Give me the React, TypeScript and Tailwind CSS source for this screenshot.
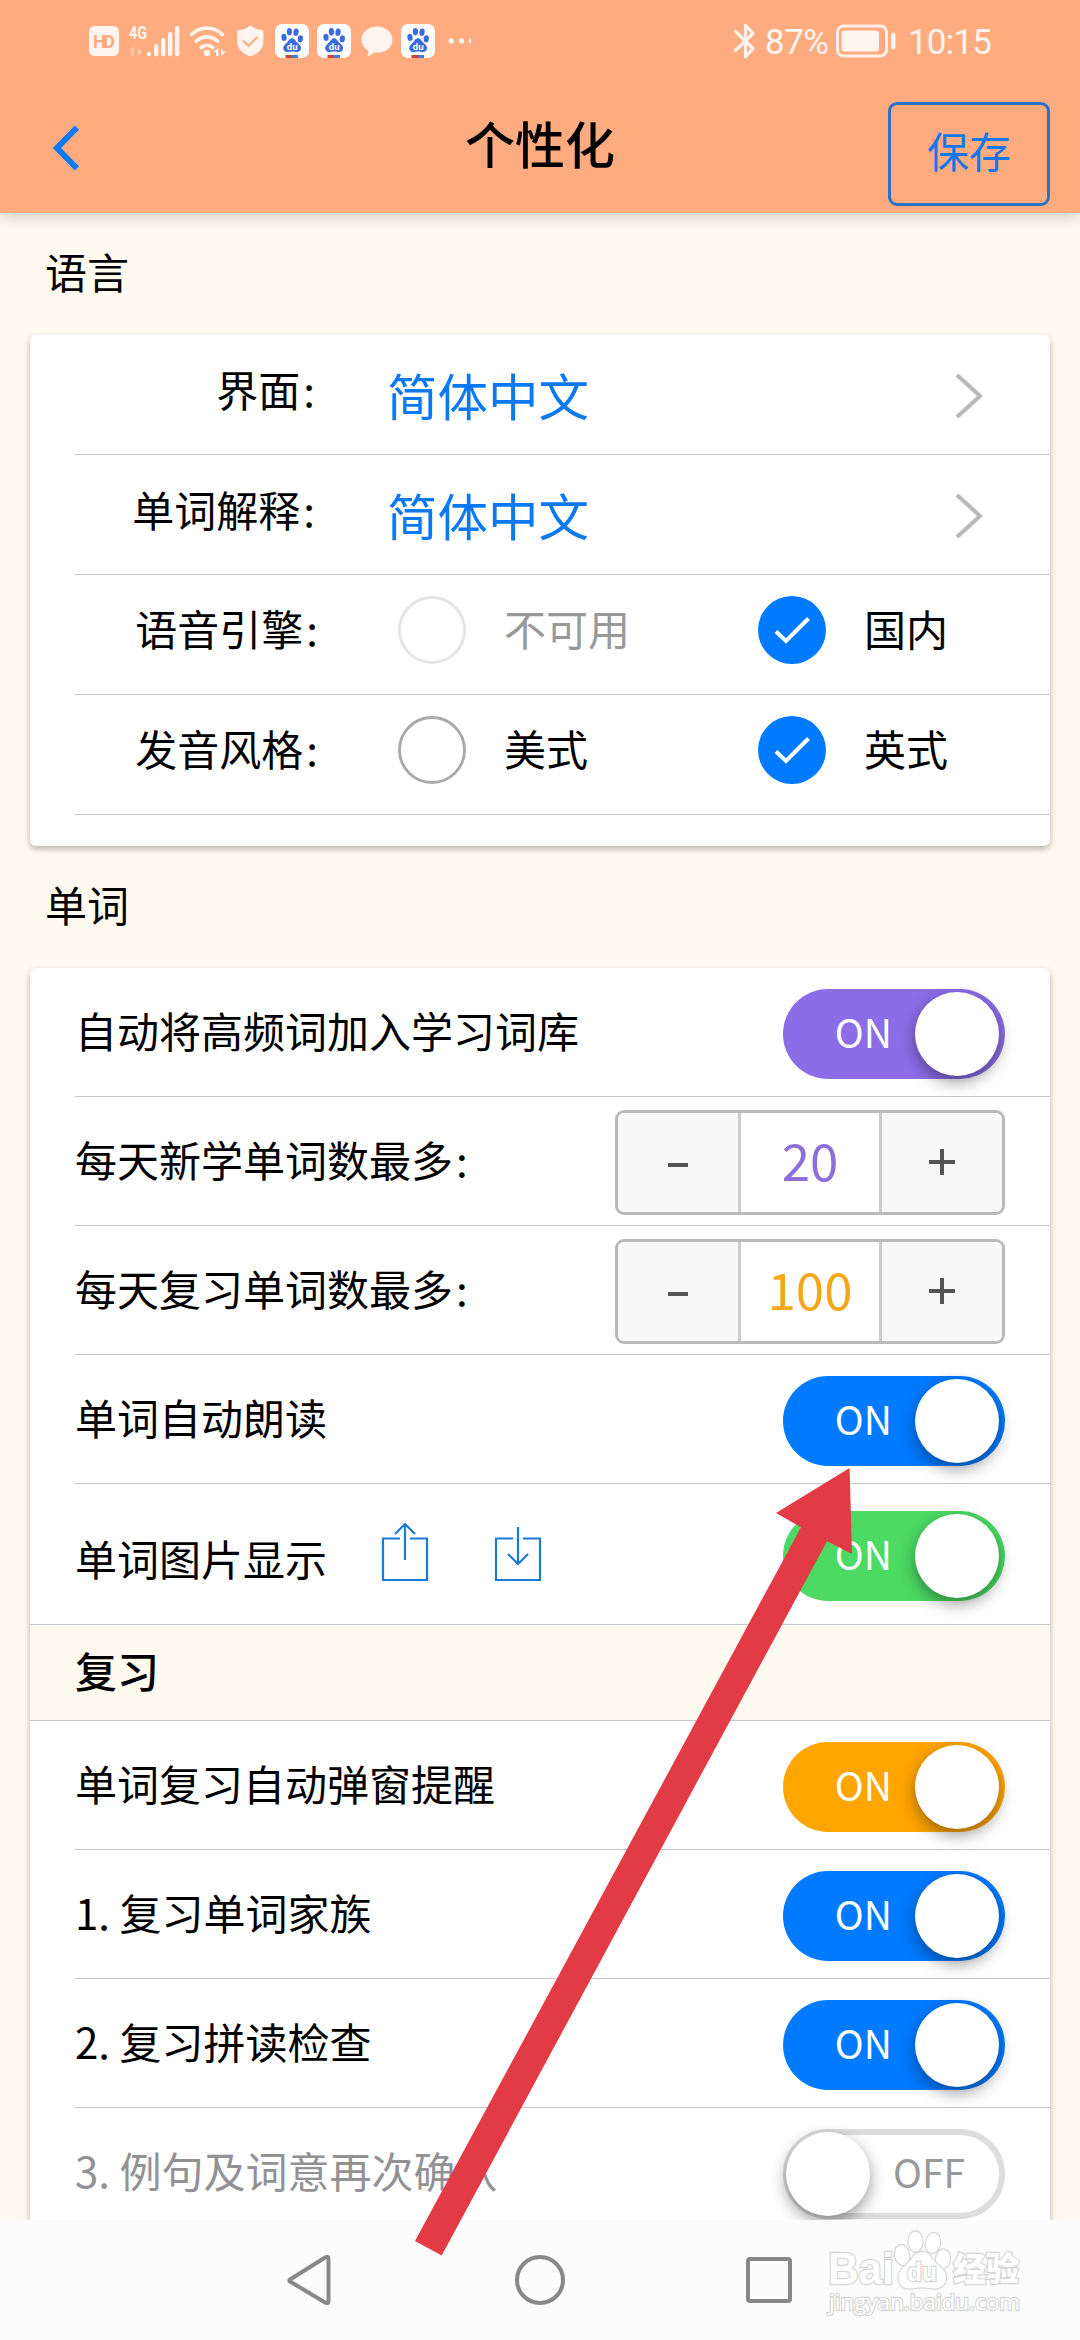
import React from "react";
import type { ReactNode } from "react";

function BaiduIcon({ className = "" }: { className?: string }) {
  return (
    <svg className={className} width="34" height="34" viewBox="0 0 34 34">
      <defs>
        <clipPath id="tile">
          <rect width="34" height="34" rx="7" />
        </clipPath>
      </defs>
      <rect width="34" height="34" rx="7" fill="#fff" />
      <g fill="#3a6be0">
        <ellipse cx="9" cy="13.3" rx="2.6" ry="3.6" transform="rotate(-8 9 13.3)" />
        <ellipse cx="14.4" cy="7.8" rx="2.6" ry="3.7" />
        <ellipse cx="21" cy="8.2" rx="2.6" ry="3.7" transform="rotate(10 21 8.2)" />
        <ellipse cx="25.3" cy="14.8" rx="2.6" ry="3.6" transform="rotate(8 25.3 14.8)" />
        <path d="M17 14.2c2.6 0 3.6 2.6 5.2 4.3 1.8 1.9 3.9 3 3.9 5.6 0 2.4-1.600 3.900-4 3.900-1.800 0-3.200-.5-5.100-.5s-3.200.5-4.900.5c-2.400 0-3.900-1.500-3.900-3.900 0-2.600 2.200-3.700 3.800-5.600 1.500-1.700 2.500-4.300 5-4.300z" />
      </g>
      <text x="17.200" y="26" textAnchor="middle" fontFamily="Roboto" fontWeight="700" fontSize="9.500" fill="#fff">
        du
      </text>
      <g clipPath="url(#tile)">
        <rect x="10.500" y="31" width="6.500" height="3" fill="#c9433f" />
        <rect x="17" y="31" width="6" height="3" fill="#4a76d8" />
      </g>
    </svg>
  );
}

function StatusBar() {
  return (
    <div className="flex h-[82px] items-center pl-[89px] font-[Roboto,sans-serif] text-[#fff5ee]">
      <svg width="30" height="30" viewBox="0 0 30 30" className="shrink-0">
        <rect width="30" height="30" rx="5.500" fill="#fff5ee" />
        <text x="15" y="22" textAnchor="middle" textLength="22" fontFamily="Roboto" fontWeight="700" fontSize="18" fill="#ffab80">
          HD
        </text>
      </svg>
      <svg width="51" height="40" viewBox="0 -4 51 40" className="ml-[10px] shrink-0" fill="#fff5ee">
        <text x="0" y="14" textLength="18" lengthAdjust="spacingAndGlyphs" fontFamily="Roboto" fontWeight="700" fontSize="18">
          4G
        </text>
        <path d="M5 21v10H2.500v-5H0zM9 21v10l5-5h-2.500z" opacity=".4" />
        <circle cx="20" cy="29" r="2.200" />
        <rect x="25" y="19" width="4.400" height="12.200" rx="2" />
        <rect x="32" y="13" width="4.400" height="18.200" rx="2" />
        <rect x="39" y="7" width="4.400" height="24.200" rx="2" />
        <rect x="46" y="1" width="4.400" height="30.200" rx="2" />
      </svg>
      <svg width="38" height="32" viewBox="0 0 38 32" className="ml-[9px] shrink-0" fill="none" stroke="#fff5ee" strokeWidth="3.600" strokeLinecap="round">
        <path d="M2.500 9.500C11.500.8 24.500.8 33.500 9.500M7.200 16.300c6.300-5.900 15.300-5.900 21.600 0M12.200 22.600c3.500-3 8.100-3 11.600 0" />
        <circle cx="18" cy="28" r="3.200" fill="#fff5ee" stroke="none" />
        <path d="M29.500 23v8h-2.500v-4h-3zM32 23v8l5-4.500h-2.500z" fill="#fff5ee" stroke="none" />
      </svg>
      <svg width="27" height="32" viewBox="0 0 27 32" className="ml-[10px] shrink-0">
        <path d="M13.300.5c3.600 2.700 7.600 4.200 12.200 4.700.6 0 .9.400.9 1v10.800c0 7-5.300 11.500-13.100 14.500C5.500 28.500.3 24 .3 17V6.200c0-.6.300-1 .9-1C5.800 4.700 9.700 3.200 13.300.5z" fill="#fff5ee" />
        <path d="M6 15.500l5.500 5.300 9-9" fill="none" stroke="#ffab80" strokeWidth="2" />
      </svg>
      <BaiduIcon className="ml-[11px] shrink-0" />
      <BaiduIcon className="ml-[8px] shrink-0" />
      <svg width="32" height="31" viewBox="0 0 32 31" className="ml-[10px] shrink-0">
        <path d="M16 .5c8.700 0 15.500 5.600 15.500 13.200 0 7.500-6.800 13.100-15.500 13.100-1 0-2-.1-3-.2-1.800 1.900-4.200 3.200-6.700 3.600 1-1.600 1.300-3.700.9-5.600C3.200 22.200.5 18.200.5 13.700.5 6.100 7.300.5 16 .5z" fill="#fff5ee" />
      </svg>
      <BaiduIcon className="ml-[8px] shrink-0" />
      <svg width="23" height="6" viewBox="0 0 23 6" className="ml-[13px] shrink-0" fill="#fff5ee">
        <circle cx="3.300" cy="3" r="2.700" />
        <circle cx="13.500" cy="3" r="2.700" />
        <circle cx="23.500" cy="3" r="2.700" />
      </svg>

      <svg width="24" height="36" viewBox="0 0 24 36" className="ml-[262px] shrink-0" fill="none" stroke="#fff5ee" strokeWidth="3.200" strokeLinejoin="round" strokeLinecap="round">
        <path d="M2.500 8.500L20 25.500l-7.500 8.300V2.200L20 10.500 2.500 27.500" />
      </svg>
      <span className="ml-[8px] mt-[2px] w-[68px] text-[35px] leading-none tracking-[-0.5px]">87%</span>
      <svg width="62" height="34" viewBox="0 0 62 34" className="ml-[3px] shrink-0">
        <rect x="1.500" y="2" width="49" height="30" rx="6" fill="none" stroke="#fff0e6" strokeWidth="3" />
        <rect x="5.500" y="6.500" width="37.500" height="21" rx="3" fill="#fff5ee" />
        <rect x="55" y="8.500" width="4.500" height="17" rx="2.200" fill="#fff5ee" />
      </svg>
      <span className="ml-[10px] mt-[3px] text-[35px] leading-none tracking-[-0.8px]">10:15</span>
    </div>
  );
}

function Header() {
  return (
    <header className="z-10 h-[213px] shrink-0 bg-[#ffab80] shadow-[0_3px_14px_rgba(60,70,70,0.28)]">
      <StatusBar />
      <div className="flex h-[131px] items-start pl-[52px] pr-[30px]">
        <svg width="28" height="46" viewBox="0 0 28 46" className="mt-[43px]" fill="none" stroke="#0a7af5" strokeWidth="6">
          <path d="M25 2.500L5 23l20 20.500" />
        </svg>
        <h1 className="ml-[385px] mt-[32px] text-[50px] font-medium leading-[56px] text-black">个性化</h1>
        <button className="ml-auto mt-[20px] flex h-[104px] w-[162px] items-center justify-center rounded-[9px] border-[3px] border-[#2a72c8] pb-[9px] text-[42px] leading-none text-[#1677e8]">
          保存
        </button>
      </div>
    </header>
  );
}

function SectionTitle({ children, className = "" }: { children: ReactNode; className?: string }) {
  return <h2 className={`pl-[45px] text-[42px] font-normal leading-[56px] ${className}`}>{children}</h2>;
}

function Colon() {
  return <span className="pl-[3px] pr-px">:</span>;
}

function LinkRow({ label }: { label: string }) {
  return (
    <div className="ml-[45px] flex h-[120px] items-center border-b border-[#c6c6c8]">
      <span className="mb-[12px] w-[241px] text-right text-[42px] leading-none">
        {label}
        <Colon />
      </span>
      <span className="ml-[71px] text-[50.5px] leading-none text-[#0b7af2]">简体中文</span>
      <svg width="28" height="46" viewBox="0 0 28 46" className="ml-auto mr-[67px] mb-[-3px]" fill="none" stroke="#b9b9b9" strokeWidth="4">
        <path d="M2 2l23 21L2 44" />
      </svg>
    </div>
  );
}

function Radio({ checked = false, disabled = false }: { checked?: boolean; disabled?: boolean }) {
  if (checked) {
    return (
      <span className="flex size-[68px] shrink-0 items-center justify-center rounded-full bg-[#007aff]">
        <svg width="68" height="68" viewBox="0 0 68 68" fill="none" stroke="#fff" strokeWidth="4">
          <path d="M18 35.500l10 9.500L50.500 22.500" />
        </svg>
      </span>
    );
  }
  return <span className={`size-[68px] shrink-0 rounded-full border-[3px] ${disabled ? "border-[#e5e5e5]" : "border-[#aaa]"}`} />;
}

function RadioRow({ label, first, second, disabled = false }: { label: string; first: string; second: string; disabled?: boolean }) {
  return (
    <div className="ml-[45px] flex h-[120px] items-center border-b border-[#c6c6c8] pb-[9px] text-[42px] leading-none">
      <span className="mb-[5px] w-[244px] text-right">
        {label}
        <Colon />
      </span>
      <span className="ml-[79px] flex w-[360px] items-center">
        <Radio disabled={disabled} />
        <span className={`ml-[38px] mb-[4px] ${disabled ? "text-[#999]" : ""}`}>{first}</span>
      </span>
      <Radio checked />
      <span className="ml-[38px] mb-[4px]">{second}</span>
    </div>
  );
}

function Toggle({ color = "", off = false }: { color?: string; off?: boolean }) {
  if (off) {
    return (
      <span className="mt-[3px] flex h-[90px] w-[222px] items-center rounded-full border-[6px] border-[#ddd] bg-white">
        <span className="-ml-[3px] size-[84px] shrink-0 rounded-full bg-white shadow-[0_6px_16px_rgba(0,0,0,0.4)]" />
        <span className="ml-[23px] mb-[4px] text-[39px] leading-none text-[#999]">OFF</span>
      </span>
    );
  }
  return (
    <span className={`mt-[3px] flex h-[90px] w-[222px] items-center justify-end rounded-full pr-[6px] ${color}`}>
      <span className="mb-[4px] mr-[23px] text-[39px] leading-none text-white">ON</span>
      <span className="size-[84px] shrink-0 rounded-full bg-white shadow-[0_6px_16px_rgba(0,0,0,0.4)]" />
    </span>
  );
}

function Stepper({ value, color }: { value: number; color: string }) {
  return (
    <span className="mt-[2px] flex h-[105px] w-[390px] overflow-hidden rounded-[9px] border-[3px] border-[#bababa]">
      <span className="flex flex-1 items-center justify-center border-r-[3px] border-[#ccc] bg-[#f8f8f8] pt-[5px]">
        <span className="h-[4px] w-[20px] bg-[#555]" />
      </span>
      <span className={`flex w-[138px] items-center justify-center pb-[5px] text-[51px] leading-none ${color}`}>{value}</span>
      <span className="flex flex-1 items-center justify-center border-l-[3px] border-[#ccc] bg-[#f8f8f8]">
        <svg width="26" height="26" viewBox="0 0 26 26" stroke="#555" strokeWidth="4">
          <path d="M13 0v26M0 13h26" />
        </svg>
      </span>
    </span>
  );
}

function SettingRow({
  label,
  children,
  height = "h-[129px]",
  inset = true,
  muted = false,
}: {
  label: ReactNode;
  children: ReactNode;
  height?: string;
  inset?: boolean;
  muted?: boolean;
}) {
  return (
    <div className={`flex shrink-0 items-center justify-between border-b border-[#c6c6c8] pr-[45px] ${height} ${inset ? "ml-[45px]" : "pl-[45px]"}`}>
      <span className={`mb-[5px] text-[42px] leading-none ${muted ? "text-[#929295]" : ""}`}>{label}</span>
      {children}
    </div>
  );
}

function TransferIcon({ down = false, className = "" }: { down?: boolean; className?: string }) {
  return (
    <svg width="48" height="60" viewBox="0 0 48 60" className={className} fill="none" stroke="#1c7bd6" strokeWidth="2.200">
      <path d="M19 16.500H2V58h44V16.500H29" />
      {down ? <path d="M24 5v37M14 32l10 10 10-10" /> : <path d="M24 38V2M14 12L24 2l10 10" />}
    </svg>
  );
}

function NavBar() {
  return (
    <nav className="z-10 flex h-[120px] shrink-0 items-center bg-[#fcfcfc] pl-[286px]">
      <svg width="46" height="52" viewBox="0 0 46 52" fill="none" stroke="#888" strokeWidth="4" strokeLinejoin="round">
        <path d="M4 25.500Q2.500 26.500 4 27.500L40 49q2.500 1 2.500-1.500v-43Q42.500 2 40 3z" />
      </svg>
      <span className="ml-[183px] size-[50px] rounded-full border-[4px] border-[#888]" />
      <span className="ml-[181px] size-[46px] rounded-[4px] border-[4px] border-[#888]" />
    </nav>
  );
}

function Watermark() {
  return (
    <svg className="absolute left-[820px] top-[2218px] z-20" width="210" height="105" viewBox="0 0 210 105" fill="#fff" stroke="#d6d6d6" strokeWidth="2.400" paintOrder="stroke">
      <text x="8" y="66" textLength="66" lengthAdjust="spacingAndGlyphs" fontFamily="Liberation Sans" fontWeight="700" fontSize="44">
        Bai
      </text>
      <ellipse cx="82" cy="37" rx="7" ry="10" transform="rotate(-10 82 37)" />
      <ellipse cx="95.500" cy="23.500" rx="7" ry="10" />
      <ellipse cx="113" cy="25" rx="7" ry="10" transform="rotate(10 113 25)" />
      <ellipse cx="123" cy="41" rx="7" ry="9.500" transform="rotate(10 123 41)" />
      <path d="M102 39c7 0 9 5.500 13 10 5 5 11 8 11 15 0 7-4.500 11.500-11 11.500-5 0-8-1.300-13-1.300s-8 1.300-13 1.300c-6.500 0-10.500-4.500-10.500-11.500 0-7 6-10 10.500-15 4-4.500 6-10 13-10z" transform="translate(0 -5)" />
      <text x="102" y="63" textAnchor="middle" textLength="30" lengthAdjust="spacingAndGlyphs" fontFamily="Liberation Sans" fontWeight="700" fontSize="26">
        du
      </text>
      <text x="133" y="63" textLength="66" fontFamily="Noto Sans CJK SC" fontWeight="900" fontSize="33">
        经验
      </text>
      <text x="9" y="92" textLength="191" lengthAdjust="spacingAndGlyphs" fontFamily="Open Sans" fontSize="22">
        jingyan.baidu.com
      </text>
    </svg>
  );
}

export default function App() {
  return (
    <div className="relative flex h-[2340px] w-[1080px] flex-col overflow-hidden bg-[#fffaf0] font-['Noto_Sans_CJK_SC',sans-serif] text-black">
      <Header />
      <main className="flex min-h-0 flex-1 flex-col overflow-hidden">
        <SectionTitle className="mt-[30px]">语言</SectionTitle>
        <section className="mx-[30px] mt-[36px] h-[511px] shrink-0 rounded-[6px] bg-white shadow-[0_3px_6px_rgba(50,50,40,0.35)]">
          <LinkRow label="界面" />
          <LinkRow label="单词解释" />
          <RadioRow label="语音引擎" first="不可用" second="国内" disabled />
          <RadioRow label="发音风格" first="美式" second="英式" />
        </section>
        <SectionTitle className="mt-[30px]">单词</SectionTitle>
        <section className="mx-[30px] mt-[36px] flex h-[1300px] shrink-0 flex-col rounded-[6px] bg-white shadow-[0_3px_6px_rgba(50,50,40,0.35)]">
          <SettingRow label="自动将高频词加入学习词库">
            <Toggle color="bg-[#8b6de7]" />
          </SettingRow>
          <SettingRow
            label={
              <>
                每天新学单词数最多
                <Colon />
              </>
            }
          >
            <Stepper value={20} color="text-[#8a70d8]" />
          </SettingRow>
          <SettingRow
            label={
              <>
                每天复习单词数最多
                <Colon />
              </>
            }
          >
            <Stepper value={100} color="text-[#f2a81a]" />
          </SettingRow>
          <SettingRow label="单词自动朗读">
            <Toggle color="bg-[#007aff]" />
          </SettingRow>
          <SettingRow
            height="h-[141px]"
            inset={false}
            label={
              <span className="flex items-center pt-[12px]">
                单词图片显示
                <TransferIcon className="-mt-[12px] ml-[54px]" />
                <TransferIcon down className="-mt-[12px] ml-[65px]" />
              </span>
            }
          >
            <Toggle color="bg-[#4cd964]" />
          </SettingRow>
          <h3 className="flex h-[96px] shrink-0 items-center border-b border-[#c6c6c8] bg-[#fffaf0] pb-[6px] pl-[45px] text-[42px] font-medium leading-none">复习</h3>
          <SettingRow label="单词复习自动弹窗提醒">
            <Toggle color="bg-[#ffa500]" />
          </SettingRow>
          <SettingRow label="1. 复习单词家族">
            <Toggle color="bg-[#007aff]" />
          </SettingRow>
          <SettingRow label="2. 复习拼读检查">
            <Toggle color="bg-[#007aff]" />
          </SettingRow>
          <SettingRow label="3. 例句及词意再次确认" muted>
            <Toggle off />
          </SettingRow>
        </section>
      </main>
      <NavBar />
      <Watermark />
      <svg className="absolute left-[400px] top-[1460px] z-30" width="470" height="810" viewBox="400 1460 470 810">
        <path d="M849.600 1468L776 1513l25 14.200L415 2241l26.700 14.500L827 1541.200l25 12.800z" fill="#e33b45" />
      </svg>
    </div>
  );
}
